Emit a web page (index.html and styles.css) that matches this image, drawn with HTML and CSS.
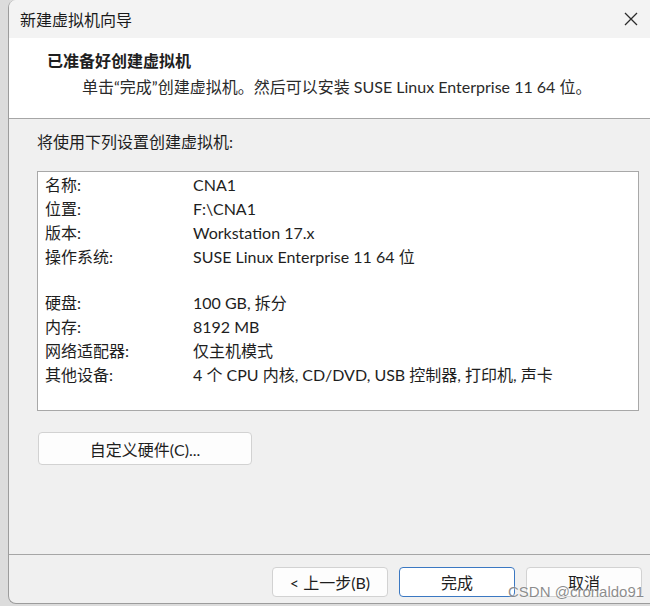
FILE: index.html
```html
<!DOCTYPE html>
<html lang="zh-CN">
<head>
    <meta charset="UTF-8">
    <title>新建虚拟机向导</title>
    <link rel="stylesheet" href="styles.css">
</head>
<body>
    <div class="window">
        <div class="titlebar">
            <span class="title">新建虚拟机向导</span>
            <svg class="close" width="14" height="14" viewBox="0 0 14 14">
                <path d="M1 1 L13 13 M13 1 L1 13" stroke="#2b2b2b" stroke-width="1.3" fill="none"/>
            </svg>
        </div>

        <div class="header">
            <h1>已准备好创建虚拟机</h1>
            <p>单击“完成”创建虚拟机。然后可以安装 SUSE Linux Enterprise 11 64 位。</p>
        </div>

        <div class="content">
            <p class="intro">将使用下列设置创建虚拟机:</p>
            <div class="summary">
                <div class="row"><span class="key">名称:</span><span>CNA1</span></div>
                <div class="row"><span class="key">位置:</span><span>F:\CNA1</span></div>
                <div class="row"><span class="key">版本:</span><span>Workstation 17.x</span></div>
                <div class="row"><span class="key">操作系统:</span><span>SUSE Linux Enterprise 11 64 位</span></div>
                <div class="row blank"></div>
                <div class="row"><span class="key">硬盘:</span><span>100 GB, 拆分</span></div>
                <div class="row"><span class="key">内存:</span><span>8192 MB</span></div>
                <div class="row"><span class="key">网络适配器:</span><span>仅主机模式</span></div>
                <div class="row"><span class="key">其他设备:</span><span>4 个 CPU 内核, CD/DVD, USB 控制器, 打印机, 声卡</span></div>
            </div>
            <button class="btn custom">自定义硬件(C)...</button>
        </div>

        <div class="footer">
            <button class="btn">&lt; 上一步(B)</button>
            <button class="btn primary">完成</button>
            <button class="btn">取消</button>
        </div>
    </div>
    <div class="watermark">CSDN @cronaldo91</div>
</body>
</html>
```

FILE: styles.css
```css
html, body {
    margin: 0;
    padding: 0;
    height: 606px;
    overflow: hidden;
}
body {
    background: #dcdcdc;
    font-family: Lato, "Noto Sans CJK SC", sans-serif;
    font-size: 16px;
    color: #1e1e1e;
    position: relative;
}
.window {
    margin-left: 8px;
    height: 603px;
    border-left: 1px solid #9c9c9c;
    border-bottom: 1px solid #9c9c9c;
    border-radius: 8px 0 0 8px;
    background: #f0f0f0;
    display: flex;
    flex-direction: column;
    overflow: hidden;
}
.titlebar {
    height: 38px;
    background: #f3f3f3;
    display: flex;
    align-items: center;
    justify-content: space-between;
    padding: 0 12px 0 11px;
    flex-shrink: 0;
}
.title {
    font-size: 16px;
    color: #1a1a1a;
}
.header {
    background: #fff;
    height: 81px;
    border-bottom: 1px solid #a6a6a6;
    padding-left: 38px;
    box-sizing: border-box;
    flex-shrink: 0;
}
.header h1 {
    margin: 0;
    padding-top: 12px;
    font-size: 16px;
    font-weight: 700;
    line-height: 22px;
}
.header p {
    margin: 4px 0 0 35px;
    line-height: 22px;
    color: #2a2a2a;
}
.content {
    flex: 1;
    padding: 11px 11px 0 28px;
}
.intro {
    margin: 0;
    line-height: 24px;
}
.summary {
    margin-top: 17px;
    height: 240px;
    box-sizing: border-box;
    background: #fff;
    border: 1px solid #a8a8a8;
    padding: 1px 7px 0;
}
.row {
    display: flex;
    height: 24px;
    line-height: 24px;
}
.row.blank {
    height: 22px;
}
.key {
    width: 148px;
    flex-shrink: 0;
}
.btn {
    font-family: Lato, "Noto Sans CJK SC", sans-serif;
    font-size: 16px;
    color: #1e1e1e;
    background: #fdfdfd;
    border: 1px solid #d2d2d2;
    border-radius: 4px;
    height: 30px;
    padding: 0;
    cursor: pointer;
}
.custom {
    margin-top: 21px;
    margin-left: 1px;
    width: 214px;
    height: 33px;
}
.footer {
    height: 49px;
    box-sizing: border-box;
    border-top: 1px solid #a6a6a6;
    display: flex;
    justify-content: flex-end;
    gap: 11px;
    padding: 12px 8px 0 0;
    flex-shrink: 0;
}
.footer .btn {
    width: 116px;
}
.primary {
    background: #fff;
    border-color: #3b78c2;
}
.watermark {
    position: absolute;
    left: 508px;
    top: 583px;
    font-family: "Liberation Sans", sans-serif;
    font-size: 15px;
    color: rgba(120, 120, 120, 0.85);
    text-shadow: 0 0 2px #fff;
}
```
